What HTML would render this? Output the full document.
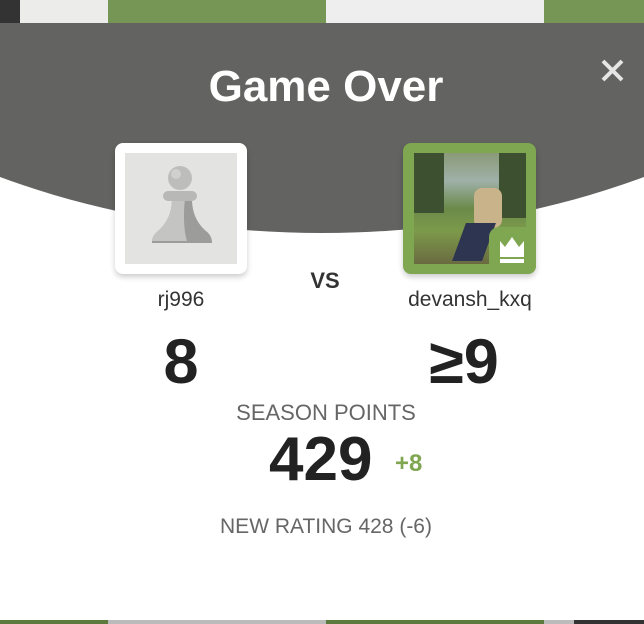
<!DOCTYPE html>
<html><head><style>
html,body{margin:0;padding:0;width:644px;height:624px;overflow:hidden;background:#fff;font-family:"Liberation Sans",sans-serif;position:relative}
.a{position:absolute}
.c{position:absolute;text-align:center;white-space:nowrap}
</style></head><body>
<div class="a" style="left:0;top:0;width:108px;height:23px;background:#ececea"></div>
<div class="a" style="left:0;top:0;width:20px;height:23px;background:#333"></div>
<div class="a" style="left:108px;top:0;width:218px;height:23px;background:#769656"></div>
<div class="a" style="left:326px;top:0;width:218px;height:23px;background:#eeeeee"></div>
<div class="a" style="left:544px;top:0;width:100px;height:23px;background:#769656"></div>
<div class="a" style="left:0;top:23px;width:644px;height:597px;overflow:hidden;background:#fff">
  <div class="a" style="left:-378px;top:-790px;width:1400px;height:1000px;border-radius:50%;background:#636361"></div>
</div>
<div class="c" style="left:0;width:652px;top:62px;font-size:44px;font-weight:bold;color:#fff">Game Over</div>
<div class="a" style="left:598px;top:56px;width:30px;height:30px">
<svg width="30" height="30"><path d="M5 5L24 24M24 5L5 24" stroke="#e6e6e6" stroke-width="4"/></svg></div>
<div class="a" style="left:115px;top:143px;width:132px;height:131px;background:#fff;border-radius:8px;box-shadow:0 3px 6px rgba(0,0,0,.2)">
 <div class="a" style="left:10px;top:10px;width:112px;height:111px;background:#e3e3e1">
  <svg width="112" height="111" viewBox="0 0 112 111">
   <path d="M47 46C47 62 40 72 33 78C28 82 27 86 27 90L87 90C87 86 86 82 81 78C74 72 67 62 67 46Z" fill="#9c9c9a"/>
   <path d="M47 46C47 62 40 72 33 78C28 82 27 86 27 88L62 88C59 78 58 62 60 46Z" fill="#c4c4c2"/>
   <rect x="38" y="38" width="34" height="10" rx="5" fill="#b8b8b6"/>
   <circle cx="55" cy="25" r="12" fill="#bdbdbb"/>
   <circle cx="51" cy="21" r="5" fill="#d0d0ce"/>
  </svg>
 </div>
</div>
<div class="a" style="left:403px;top:143px;width:133px;height:131px;background:#7fa650;border-radius:8px;box-shadow:0 3px 6px rgba(0,0,0,.2)">
 <div class="a" style="left:11px;top:10px;width:112px;height:111px;background:linear-gradient(#8a9a78 0%,#9fb0a8 25%,#6b8a4a 50%,#7c9a4a 70%,#6a6a40 100%)">
  <div class="a" style="left:0;top:0;width:30px;height:60px;background:#3d5030"></div>
  <div class="a" style="left:85px;top:0;width:27px;height:65px;background:#3d5030"></div>
  <div class="a" style="left:60px;top:35px;width:28px;height:40px;background:#c9b38a;border-radius:8px"></div>
  <div class="a" style="left:45px;top:70px;width:30px;height:38px;background:#2e3550;transform:skew(-20deg)"></div>
 </div>
 <div class="a" style="left:86px;top:84px;width:47px;height:47px;background:#7fa650;border-radius:10px 0 8px 0">
  <svg width="47" height="47"><path d="M11 14l5 6 7-10 7 10 5-6v16H11z" fill="#fff"/><rect x="11" y="32" width="24" height="4" fill="#fff"/></svg>
 </div>
</div>
<div class="c" style="left:0;width:650px;top:268px;font-size:22px;font-weight:bold;color:#333">VS</div>
<div class="c" style="left:81px;width:200px;top:288px;font-size:21px;color:#333">rj996</div>
<div class="c" style="left:370px;width:200px;top:288px;font-size:21px;color:#333">devansh_kxq</div>
<div class="c" style="left:81px;width:200px;top:326px;font-size:63px;font-weight:bold;color:#222">8</div>
<div class="c" style="left:364px;width:200px;top:326px;font-size:63px;font-weight:bold;color:#222">≥9</div>
<div class="c" style="left:0;width:652px;top:400px;font-size:22px;color:#666">SEASON POINTS</div>
<div class="a" style="left:269px;top:424px;font-size:62px;font-weight:bold;color:#222">429</div>
<div class="a" style="left:395px;top:450px;font-size:24px;font-weight:bold;color:#7fa650">+8</div>
<div class="c" style="left:0;width:652px;top:515px;font-size:21px;color:#666">NEW RATING 428 (-6)</div>
<div class="a" style="left:0;top:620px;width:108px;height:4px;background:#5d7a3e"></div>
<div class="a" style="left:108px;top:620px;width:218px;height:4px;background:#bbb"></div>
<div class="a" style="left:326px;top:620px;width:218px;height:4px;background:#5d7a3e"></div>
<div class="a" style="left:544px;top:620px;width:30px;height:4px;background:#bbb"></div>
<div class="a" style="left:574px;top:620px;width:70px;height:4px;background:#333"></div>
</body></html>
